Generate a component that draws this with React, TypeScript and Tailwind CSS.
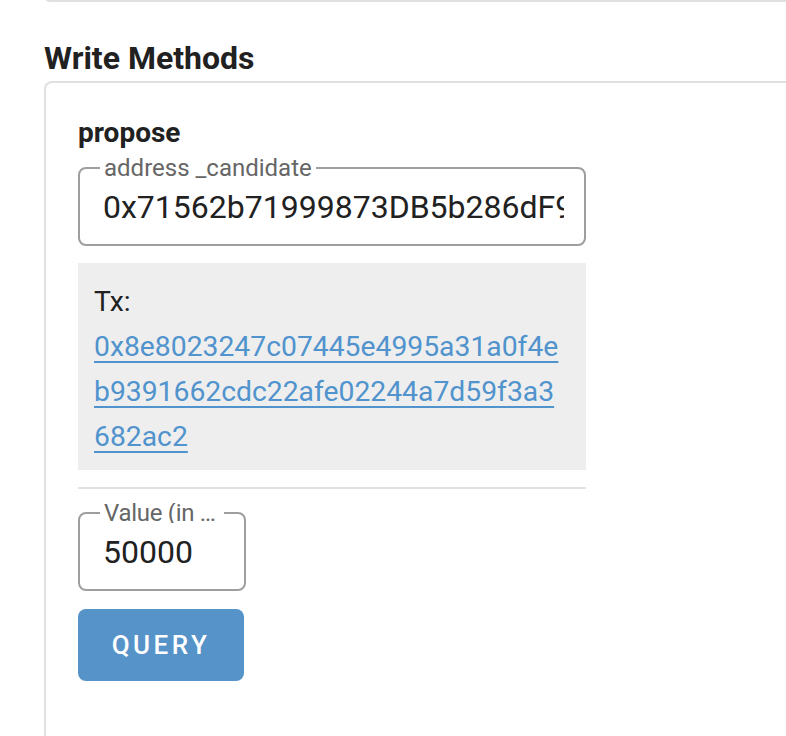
export default function App() {
  return (
    <div className="min-h-screen bg-white text-[#212121] overflow-hidden" style={{ fontFamily: "Roboto, 'Liberation Sans', sans-serif" }}>
      {/* end of the card above */}
      <div className="ml-[44px] -mt-[10px] h-[12px] w-[800px] rounded-lg border-2 border-t-0 border-[#e0e0e0]" />

      <h2 className="ml-[44px] mt-[37px] text-[32px] font-bold leading-[38px] text-[#212121]">Write Methods</h2>

      <div className="ml-[44px] mt-[4px] w-[800px] rounded-lg border-2 border-r-0 border-[#e0e0e0] pl-[32px] pt-[34px] pb-[120px]">
        <div className="w-[508px] flex flex-col">
          <div className="text-[28px] font-bold leading-[32px] text-[#212121]">propose</div>

          <fieldset className="mt-[9px] h-[88px] min-w-0 rounded-lg border-2 border-[#9e9e9e] px-[20px] overflow-hidden">
            <legend className="px-[4px] text-[24px] leading-[20px] text-[#666]">address _candidate</legend>
            <div className="mt-[9px] ml-[3px] whitespace-nowrap overflow-hidden text-[32px] leading-[40px] text-[#212121]">0x71562b71999873DB5b286dF957af199Ec94617F7</div>
          </fieldset>

          <div className="mt-[17px] bg-[#eeeeee] pl-[16px] pr-[20px] pt-[16px] pb-[11px] text-[28.3px] leading-[45px]">
            <div className="text-[#212121]">Tx:</div>
            <a href="#" className="break-all text-[#5093cd] underline underline-offset-[5px] decoration-2">0x8e8023247c07445e4995a31a0f4eb9391662cdc22afe02244a7d59f3a3682ac2</a>
          </div>

          <div className="mt-[17px] h-[2px] bg-[#e0e0e0]" />

          <fieldset className="mt-[14px] h-[88px] w-[168px] min-w-0 rounded-lg border-2 border-[#9e9e9e] px-[20px] overflow-hidden">
            <legend className="max-w-[124px] px-[4px] text-[24px] leading-[20px] tracking-[-0.3px] text-[#666] whitespace-nowrap overflow-hidden text-ellipsis">Value (in wei)</legend>
            <div className="mt-[9px] ml-[3px] text-[32px] leading-[40px] text-[#212121]">50000</div>
          </fieldset>

          <button className="mt-[18px] h-[72px] w-[166px] rounded-lg bg-[#5593c9] text-[26px] font-medium tracking-[3.5px] text-white">QUERY</button>
        </div>
      </div>
    </div>
  )
}
